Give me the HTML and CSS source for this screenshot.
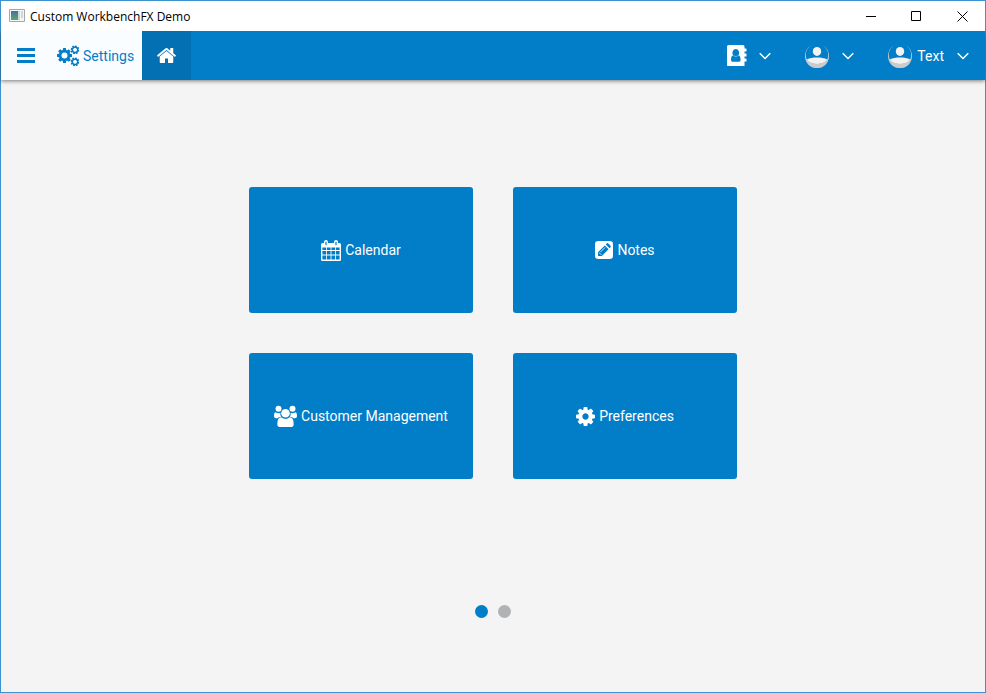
FILE: index.html
```html
<!DOCTYPE html>
<html lang="en">
<head>
<meta charset="utf-8">
<title>Custom WorkbenchFX Demo</title>
<link rel="stylesheet" href="styles.css">
</head>
<body>
<svg class="defs" aria-hidden="true">
  <symbol id="cog" viewBox="128 128 1536 1536"><path d="M1152 896q0-106-75-181t-181-75-181 75-75 181 75 181 181 75 181-75 75-181zm512-109v222q0 12-8 23t-20 13l-185 28q-19 54-39 91 35 50 107 138 10 12 10 25t-9 23q-27 37-99 108t-94 71q-12 0-26-9l-138-108q-44 23-91 38-16 136-29 186-7 28-36 28h-222q-14 0-24.500-8.500t-11.500-21.500l-28-184q-49-16-90-37l-141 107q-10 9-25 9-14 0-25-11-126-114-165-168-7-10-7-23 0-12 8-23 15-21 51-66.500t54-70.500q-27-50-41-99l-183-27q-13-2-21-12.500t-8-23.500v-222q0-12 8-23t19-13l186-28q14-46 39-92-40-57-107-138-10-12-10-24 0-10 9-23 26-36 98.500-107.500t94.500-71.500q13 0 26 10l138 107q44-23 91-38 16-136 29-186 7-28 36-28h222q14 0 24.500 8.500t11.500 21.500l28 184q49 16 90 37l142-107q9-9 24-9 13 0 25 10 129 119 165 170 7 8 7 22 0 12-8 23-15 21-51 66.500t-54 70.500q26 50 41 98l183 28q13 2 21 12.500t8 23.500z"/></symbol>
  <symbol id="avatar" viewBox="0 0 24 24">
    <circle cx="12" cy="12" r="12" fill="#c9cbcc"/>
    <circle cx="12" cy="10.800" r="11.200" fill="#027dc8"/>
    <path d="M1.800 15.500C4.500 13.800 8 13.400 12 13.400s7.500.4 10.200 2.100C20.500 19 16.500 20 12 20S3.500 19 1.800 15.500z" fill="#f2f2f2"/>
    <path d="M.6 15C3 18.200 7.500 19.800 12 19.800S21 18.200 23.400 15C22 20.800 17.500 24 12 24S2 20.800.6 15z" fill="#c9cbcc"/>
    <ellipse cx="12" cy="7.400" rx="4.200" ry="4.500" fill="#f2f2f2"/>
  </symbol>
  <symbol id="chevron" viewBox="0 0 12 8"><path d="M.7 1.200 6 6.500l5.300-5.300" fill="none" stroke="#fff" stroke-width="1.500"/></symbol>
</svg>
<div class="window">
  <header class="titlebar">
    <svg class="app-icon" viewBox="0 0 16 14" aria-hidden="true">
      <defs><linearGradient id="screen" x2="0" y2="1"><stop stop-color="#4a6da0"/><stop offset="1" stop-color="#58a868"/></linearGradient></defs>
      <path d="M.5.500h15v12H.5z" fill="#f5f5f5" stroke="#a5a8ab"/>
      <path d="M2 2h7v9H2z" fill="url(#screen)"/><path d="M9 2h2v9H9zM12 2h2v7h-2z" fill="#cfd8dc"/>
    </svg>
    <h1 class="title">Custom WorkbenchFX Demo</h1>
    <button class="win-button" aria-label="Minimize"><svg width="11" height="11" viewBox="0 0 11 11"><path d="M1 5.500h10"/></svg></button>
    <button class="win-button" aria-label="Maximize"><svg width="11" height="11" viewBox="0 0 11 11"><path d="M.5.500h9v9h-9z"/></svg></button>
    <button class="win-button" aria-label="Close"><svg width="11" height="11" viewBox="0 0 11 11"><path d="m.5.500 10 10m0-10-10 10"/></svg></button>
  </header>
  <nav class="toolbar">
    <div class="menu-group">
      <button class="tool menu" aria-label="Menu"><svg width="18" height="15" viewBox="0 0 18 15"><path d="M0 0h18v3H0zM0 6h18v3H0zM0 12h18v3H0z"/></svg></button>
      <button class="tool settings"><svg width="22" height="22" viewBox="0 0 22 22"><use href="#cog" x="0" y="3" width="15" height="15"/><use href="#cog" width="9" height="9" transform="translate(13.500 .3) rotate(15 4.500 4.500)"/><use href="#cog" width="9" height="9" transform="translate(13.500 12.300) rotate(15 4.500 4.500)"/><g fill="#fafdff"><circle cx="7.500" cy="10.500" r="3"/><circle cx="18" cy="4.800" r="1.900"/><circle cx="18" cy="16.800" r="1.900"/></g></svg><span>Settings</span></button>
    </div>
    <button class="tool home" aria-label="Home"><svg width="21" height="21" viewBox="0 0 1792 1792"><path d="M1472 992v480q0 26-19 45t-45 19h-384v-384h-256v384h-384q-26 0-45-19t-19-45v-480q0-1 .5-3t.5-3l575-474 575 474q1 2 1 6zm223-69l-62 74q-8 9-21 11h-3q-13 0-21-7l-692-577-692 577q-12 8-24 7-13-2-21-11l-62-74q-8-10-7-23.500t11-21.500l719-599q32-26 76-26t76 26l244 204v-195q0-14 9-23t23-9h192q14 0 23 9t9 23v408l219 182q10 8 11 21.500t-7 23.500z"/></svg></button>
    <div class="account-group">
      <button class="tool drop contacts" aria-label="Contacts"><svg width="20" height="21" viewBox="0 0 20 21"><path fill-rule="evenodd" d="M1.500 0H16q1.500 0 1.500 1.500V3.500H19q.5 0 .5.500v2q0 .5-.5.500h-1.500v2H19q.5 0 .5.500v2q0 .5-.5.500h-1.500v2H19q.5 0 .5.500v2q0 .5-.5.500h-1.500v5q0 1.500-1.500 1.500H1.500Q0 21 0 19.500v-18Q0 0 1.500 0zM8.800 4a3.400 3.800 0 0 0-2.500 6.300C4.600 10.800 4 12.500 4 15q0 1.800 1.500 1.800h6.600q1.500 0 1.500-1.800c0-2.500-.6-4.200-2.300-4.700A3.400 3.800 0 0 0 8.800 4z"/><path d="M6.300 10.600q2.500 2 5 0" fill="none" stroke="#fff" stroke-width=".4"/></svg><svg class="chevron" width="12" height="8"><use href="#chevron"/></svg></button>
      <button class="tool drop" aria-label="Account"><svg width="24" height="24"><use href="#avatar"/></svg><svg class="chevron" width="12" height="8"><use href="#chevron"/></svg></button>
      <button class="tool drop"><svg width="24" height="24"><use href="#avatar"/></svg><span>Text</span><svg class="chevron" width="12" height="8"><use href="#chevron"/></svg></button>
    </div>
  </nav>
  <main class="content">
    <div class="tiles">
      <button class="tile"><svg width="20" height="22" viewBox="0 -1 20 22"><path fill-rule="evenodd" d="M1.500 3H3V2q0-2 2-2t2 2v1h6V2q0-2 2-2t2 2v1h1.500Q20 3 20 4.500v15q0 1.500-1.500 1.500h-17Q0 21 0 19.500v-15Q0 3 1.500 3zM4.400 1.800v3.500h1.200V1.800zm10 0v3.500h1.200V1.800zM1.400 7.500V10H5V7.500zm4.400 0V10h3.800V7.500zm4.600 0V10h3.800V7.500zm4.600 0V10h3.600V7.500zM1.400 11v3.600H5V11zm4.400 0v3.600h3.800V11zm4.600 0v3.600h3.800V11zm4.600 0v3.600h3.600V11zM1.400 15.600v4H5v-4zm4.400 0v4h3.800v-4zm4.600 0v4h3.800v-4zm4.600 0v4h3.600v-4z"/></svg><span>Calendar</span></button>
      <button class="tile"><svg width="18" height="18" viewBox="0 0 18 18"><rect width="18" height="18" rx="3.300"/><path d="M3 15v-3.800l6.800-6.800 3.800 3.800L6.800 15zM10.800 3.400l.9-.9q.8-.8 1.600 0l2.200 2.200q.8.800 0 1.600l-.9.900z" fill="#027dc8"/><path d="m4.200 11.700 2.100 2.100M5.300 11.200l4.900-4.900" fill="none" stroke="#fff" stroke-width=".8"/></svg><span>Notes</span></button>
      <button class="tile"><svg width="23" height="22" viewBox="0 0 23 22"><circle cx="4.500" cy="3.800" r="3"/><circle cx="18.500" cy="3.800" r="3"/><path d="M1.300 7.200q3.200 1.800 5.100.5Q5.900 10.200 7.200 11.700q-2.600.1-3.800 1.500H2Q0 13.200 0 11.300 0 7.700 1.300 7.200zM21.700 7.200q-3.200 1.800-5.100.5.500 2.500-.8 4 2.600.1 3.800 1.500H21q2 0 2-1.900 0-3.600-1.300-4.100z"/><circle cx="11.500" cy="8.200" r="4.300"/><path d="M7.200 12.200q4.300 3.400 8.600 0 3.900.1 3.900 7 0 2.800-2.900 2.800H6.200q-2.900 0-2.900-2.800 0-6.900 3.900-7z"/></svg><span>Customer Management</span></button>
      <button class="tile"><svg width="19" height="19"><use href="#cog"/></svg><span>Preferences</span></button>
    </div>
    <div class="pages">
      <button class="page active" aria-label="Page 1"></button>
      <button class="page" aria-label="Page 2"></button>
    </div>
  </main>
</div>
</body>
</html>
```
FILE: styles.css
```css
* { box-sizing: border-box; }
body { margin: 0; font-family: Roboto, sans-serif; font-size: 14px; }
button { margin: 0; padding: 0; border: 0; background: none; font: inherit; color: inherit; }
svg { display: block; flex: none; fill: currentColor; }
.defs { position: absolute; width: 0; height: 0; }

.window { display: flex; flex-direction: column; min-height: 100vh; border: 1px solid #3a92d0; background: #f4f4f4; }

.titlebar { position: relative; z-index: 1; display: flex; align-items: center; height: 30px; padding-left: 8px; background: #fff; color: #000; }
.app-icon { width: 16px; height: 14px; }
.title { flex: 1; margin: 0 0 0 5px; font: 12px "Open Sans", sans-serif; }
.win-button { display: grid; place-items: center; width: 46px; height: 30px; }
.win-button svg { fill: none; stroke: #000; stroke-width: 1; }

.toolbar { display: flex; height: 49px; background: #027dc8; color: #fff; box-shadow: 0 1px 4px rgba(0, 0, 0, .5); }
.tool { display: flex; align-items: center; gap: 4px; }
.menu-group { display: flex; background: #fafdff; color: #027dc8; }
.menu { padding: 0 15px 0 16px; }
.settings { padding: 0 8px 0 7px; }
.home { justify-content: center; width: 49px; background: #0270b3; }
.account-group { display: flex; gap: 34px; margin-left: auto; padding-right: 16px; }
.drop { gap: 5px; }
.chevron { margin-left: 8px; }
.contacts { gap: 4px; }

.content { display: flex; flex: 1; flex-direction: column; }
.tiles { display: grid; flex: 1; grid-template-columns: 224px 224px; grid-auto-rows: 126px; gap: 40px; place-content: center; }
.tile { display: flex; align-items: center; justify-content: center; gap: 4px; border-radius: 3px; background: #027dc8; color: #fff; }
.pages { display: flex; justify-content: center; gap: 10px; padding: 19px 0 74px; }
.page { width: 13px; height: 13px; border-radius: 50%; background: #b1b2b3; }
.page.active { background: #027dc8; }
```
